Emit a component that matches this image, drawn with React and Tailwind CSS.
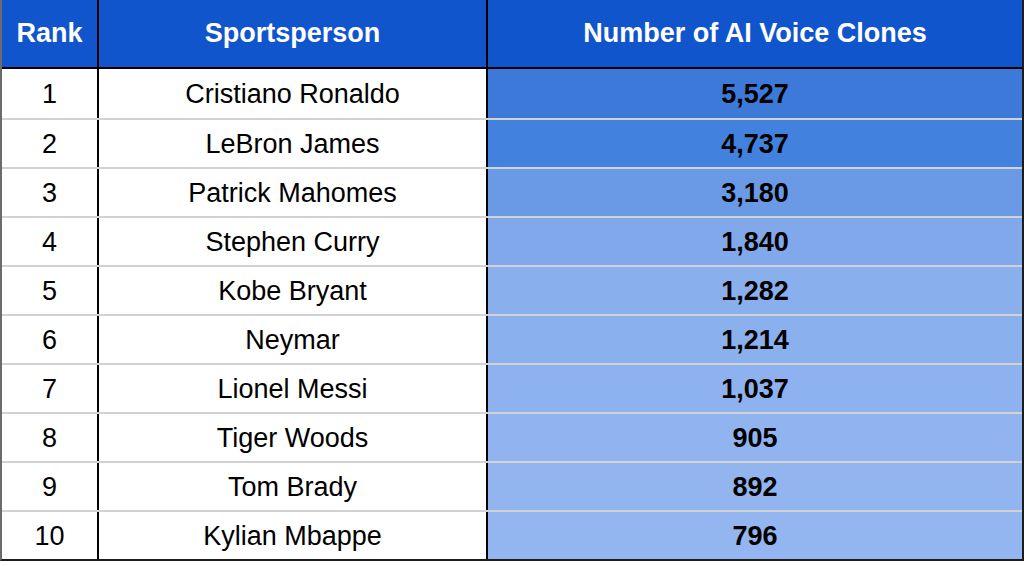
import React from 'react';

const rows = [
  { rank: 1, name: 'Cristiano Ronaldo', clones: '5,527', bg: 'bg-[#3c79d9]' },
  { rank: 2, name: 'LeBron James', clones: '4,737', bg: 'bg-[#4381de]' },
  { rank: 3, name: 'Patrick Mahomes', clones: '3,180', bg: 'bg-[#6a9ae5]' },
  { rank: 4, name: 'Stephen Curry', clones: '1,840', bg: 'bg-[#80a8ea]' },
  { rank: 5, name: 'Kobe Bryant', clones: '1,282', bg: 'bg-[#89afed]' },
  { rank: 6, name: 'Neymar', clones: '1,214', bg: 'bg-[#8bb0ee]' },
  { rank: 7, name: 'Lionel Messi', clones: '1,037', bg: 'bg-[#8db2ef]' },
  { rank: 8, name: 'Tiger Woods', clones: '905', bg: 'bg-[#91b4f0]' },
  { rank: 9, name: 'Tom Brady', clones: '892', bg: 'bg-[#92b5f0]' },
  { rank: 10, name: 'Kylian Mbappe', clones: '796', bg: 'bg-[#93b6f0]' }
];

export default function App() {
  return (
    <div className="h-[566px] w-[1024px] bg-white font-['Liberation_Sans',Arial,sans-serif] text-[27px] text-black">
      <div className="border-b-2 border-l-2 border-r-2 border-b-[#1c1c1c] border-l-[#6b6b6b] border-r-[#1c1c1c]">
        <div className="flex h-[69px] border-b-2 border-black bg-[#1155cc] font-bold text-white">
          <div className="flex w-[97px] items-center justify-center border-r-2 border-black">Rank</div>
          <div className="flex w-[389px] items-center justify-center border-r-2 border-black">Sportsperson</div>
          <div className="flex flex-1 items-center justify-center">Number of AI Voice Clones</div>
        </div>

        {rows.map((row, i) => (
          <div key={row.rank} className={i === 0 ? 'flex h-[49px]' : 'flex h-[49px] border-t-2 border-[#d2d2d2]'}>
            <div className="flex w-[97px] items-center justify-center border-r-2 border-black pt-[2px]">{row.rank}</div>
            <div className="flex w-[389px] items-center justify-center border-r-2 border-black pt-[2px]">{row.name}</div>
            <div className={`flex flex-1 items-center justify-center pt-[2px] font-bold ${row.bg}`}>{row.clones}</div>
          </div>
        ))}
      </div>
    </div>
  );
}
